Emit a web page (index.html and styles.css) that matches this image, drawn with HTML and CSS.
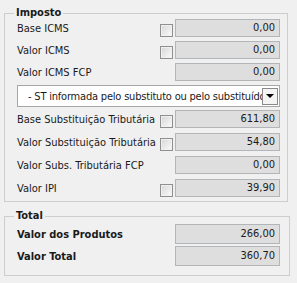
FILE: index.html
```html
<!DOCTYPE html>
<html lang="pt-BR">
<head>
  <meta charset="UTF-8">
  <meta name="viewport" content="width=device-width, initial-scale=1.0">
  <title>Imposto</title>
  <link rel="stylesheet" href="styles.css">
</head>
<body>
  <fieldset class="group group-tax">
    <legend>Imposto</legend>
    <div class="rows">
      <div class="row"><span class="label">Base ICMS</span><span class="check"></span><span class="field">0,00</span></div>
      <div class="row"><span class="label">Valor ICMS</span><span class="check"></span><span class="field">0,00</span></div>
      <div class="row"><span class="label">Valor ICMS FCP</span><span></span><span class="field">0,00</span></div>
    </div>
    <div class="select">
      <span class="select-text">- ST informada pelo substituto ou pelo substituído</span>
      <span class="select-btn"></span>
    </div>
    <div class="rows rows-st">
      <div class="row"><span class="label">Base Substituição Tributária</span><span class="check"></span><span class="field">611,80</span></div>
      <div class="row"><span class="label">Valor Substituição Tributária</span><span class="check"></span><span class="field">54,80</span></div>
      <div class="row"><span class="label">Valor Subs. Tributária FCP</span><span></span><span class="field">0,00</span></div>
      <div class="row"><span class="label">Valor IPI</span><span class="check"></span><span class="field">39,90</span></div>
    </div>
  </fieldset>

  <fieldset class="group group-total">
    <legend>Total</legend>
    <div class="rows rows-total">
      <div class="row row-total"><span class="label">Valor dos Produtos</span><span class="field">266,00</span></div>
      <div class="row row-total"><span class="label">Valor Total</span><span class="field">360,70</span></div>
    </div>
  </fieldset>
</body>
</html>
```

FILE: styles.css
```css
body {
  margin: 0;
  background: #f0f0f0;
  font-family: "DejaVu Sans Condensed", "DejaVu Sans", sans-serif;
  font-stretch: condensed;
  font-size: 11px;
  color: #1a1a1a;
}
.group {
  margin: 7px 0 0 4px;
  padding: 0 6px 4px 12px;
  border: 1px solid #cdcdcd;
  width: 284px;
  box-sizing: border-box;
  min-width: 0;
}
.group legend {
  margin-left: -3px;
  padding: 0 2px;
  font-weight: bold;
  line-height: 12px;
}
.rows {
  display: grid;
  row-gap: 4px;
}
.row {
  display: grid;
  grid-template-columns: 141px 13px 105px;
  column-gap: 2px;
  height: 18px;
  align-items: center;
}
.label {
  white-space: nowrap;
}
.check {
  align-self: end;
  width: 13px;
  height: 13px;
  box-sizing: border-box;
  border: 1px solid #8e8f8f;
  background: linear-gradient(135deg, #d6d6d6, #fbfbfb);
  box-shadow: inset 0 0 0 1px #f0f0f0;
}
.field {
  height: 18px;
  box-sizing: border-box;
  background: #dedede;
  border: 1px solid #b2b6b9;
  text-align: right;
  padding-right: 4px;
  line-height: 16px;
}
.select {
  margin: 4px 1px 0 0;
  height: 22px;
  box-sizing: border-box;
  border: 1px solid #a7a7a7;
  background: #fff;
  display: flex;
  align-items: center;
  padding: 0 1px 0 10px;
}
.select-text {
  flex: 1;
  overflow: hidden;
  white-space: nowrap;
  letter-spacing: -0.2px;
}
.select-btn {
  width: 16px;
  height: 17px;
  box-sizing: border-box;
  border: 1px solid #8a8a8a;
  background: #f4f4f4;
  display: flex;
  align-items: center;
  justify-content: center;
}
.select-btn::after {
  content: "";
  border-left: 4px solid transparent;
  border-right: 4px solid transparent;
  border-top: 4px solid #000;
}
.rows-st {
  margin-top: 3px;
  row-gap: 5px;
}
.group-total {
  margin-top: 8px;
  padding: 2px 6px 9px 12px;
  width: 286px;
}
.rows-total {
  row-gap: 2px;
}
.row-total {
  grid-template-columns: 156px 105px;
  height: 20px;
}
.row-total .label {
  font-weight: bold;
}
.row-total .field {
  height: 20px;
  line-height: 18px;
}
```
